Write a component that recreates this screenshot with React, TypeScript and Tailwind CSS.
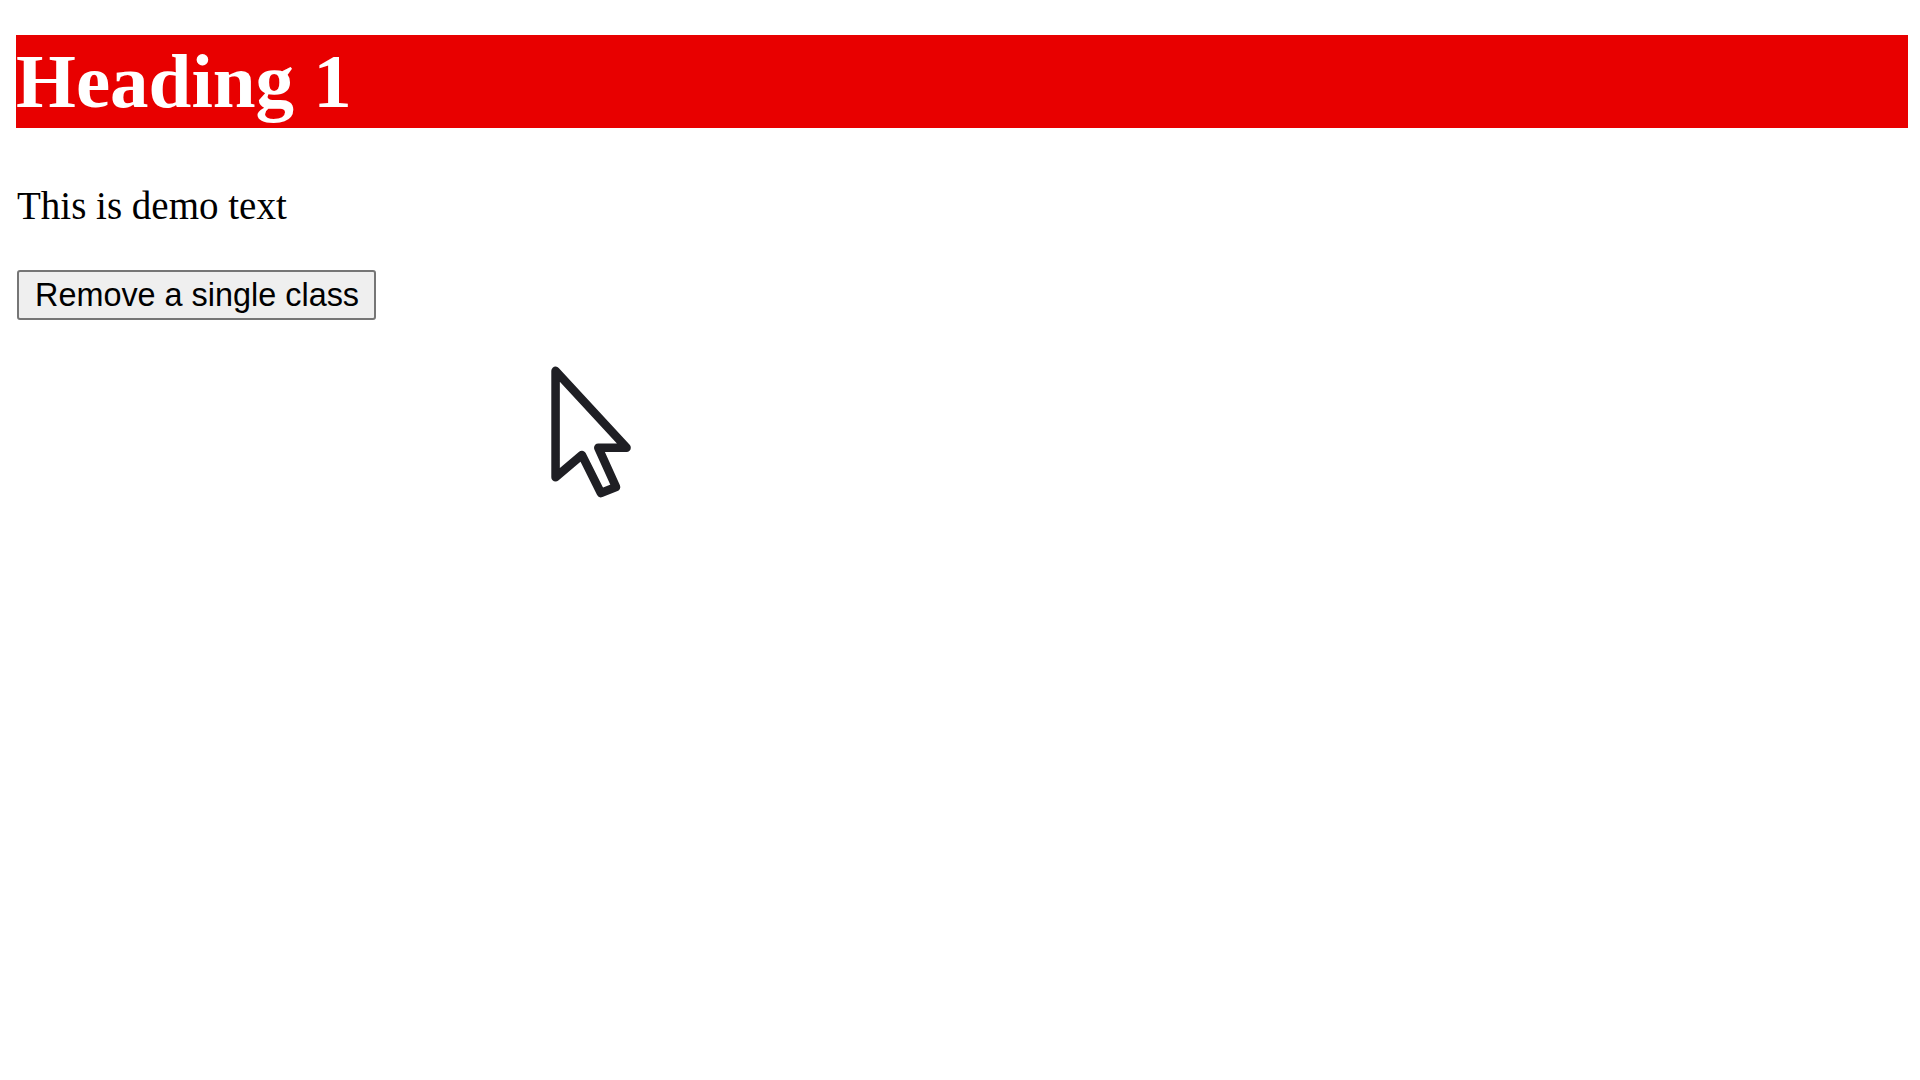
export default function App() {
  return (
    <div className="relative min-h-screen w-full bg-white pt-[35px] pl-[16px] pr-[12px]">
      <h1 className="bg-[#e80000] text-white font-bold text-[77px] leading-[93px] h-[93px] font-['Liberation_Serif',serif]">
        Heading 1
      </h1>

      <p className="mt-[55px] pl-[1px] text-black text-[39px] leading-[45px] font-['Liberation_Serif',serif]">
        This is demo text
      </p>

      <button className="mt-[42px] ml-[1px] block border-2 border-[#767676] rounded-[3px] bg-[#efefef] pl-[16px] pr-[15px] py-[5px] text-black text-[32.4px] leading-[36px] font-['Liberation_Sans',sans-serif]">
        Remove a single class
      </button>

      {/* mouse pointer from the capture */}
      <svg
        className="absolute left-[549px] top-[364px] pointer-events-none"
        width="92"
        height="145"
        viewBox="-1 -1 14 22"
      >
        <path
          d="M0 0 L0 16.2 L4 12.8 L6.9 18.6 L9.2 17.7 L6.5 11.7 L10.8 11.7 Z"
          fill="white"
          stroke="#1f1f24"
          strokeWidth="1.3"
          strokeLinejoin="round"
        />
      </svg>
    </div>
  )
}
